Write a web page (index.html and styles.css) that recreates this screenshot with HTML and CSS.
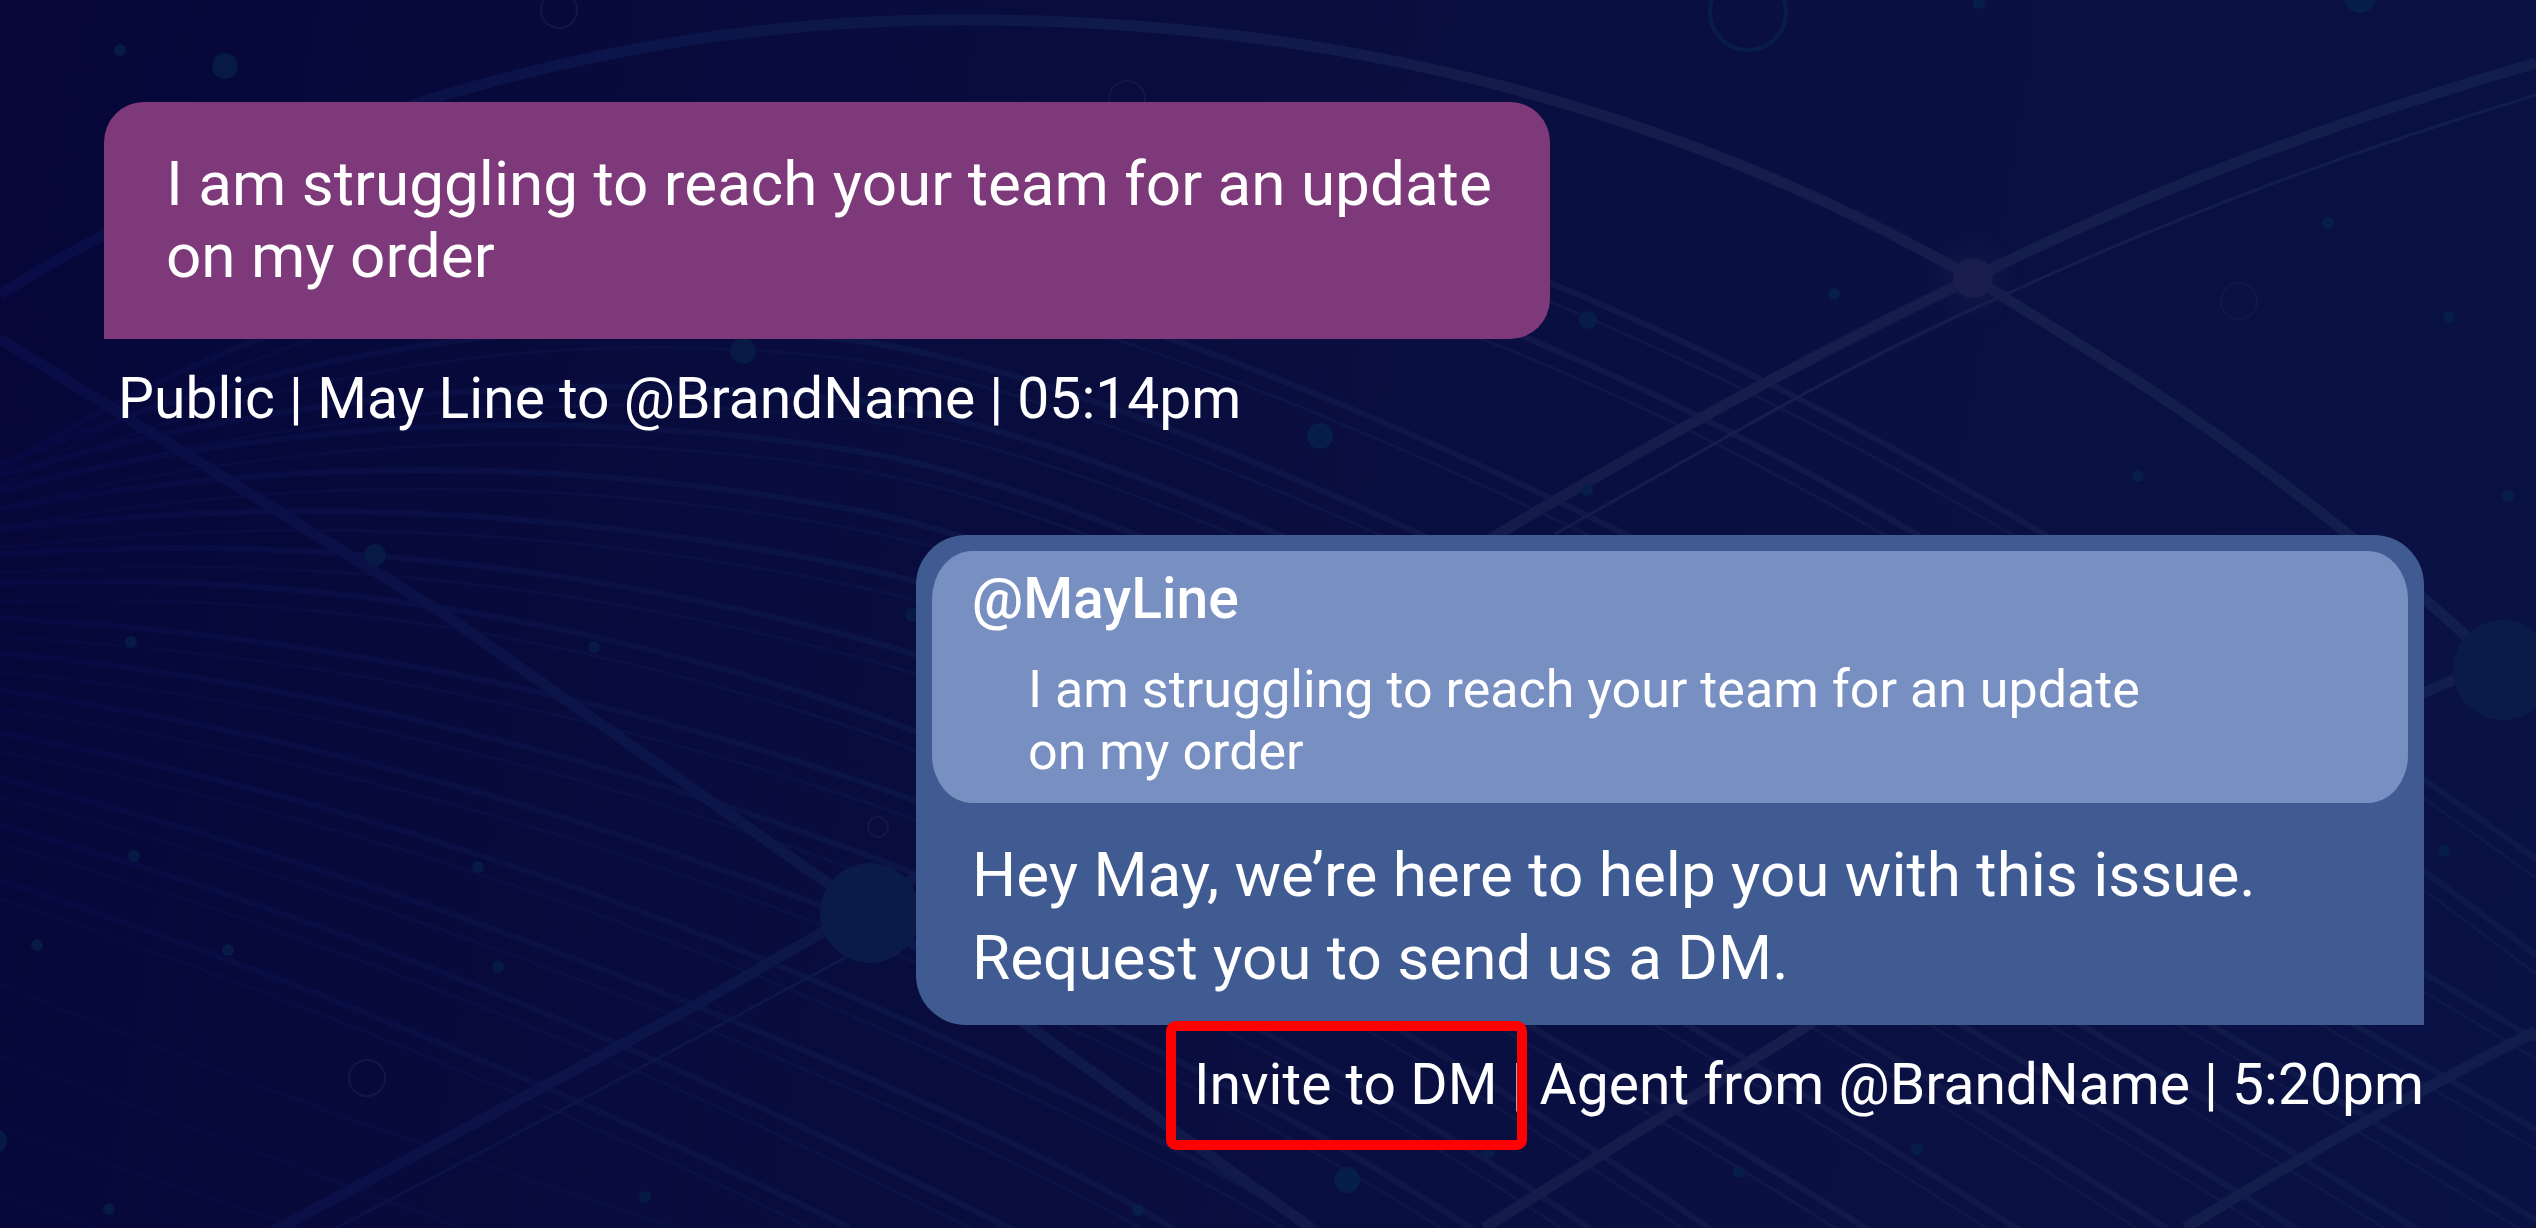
FILE: index.html
```html
<!DOCTYPE html>
<html lang="en">
<head>
    <meta charset="UTF-8">
    <meta name="viewport" content="width=device-width, initial-scale=1.0">
    <title>Invite to DM</title>
    <link rel="stylesheet" href="styles.css">
</head>
<body>
    <svg class="backdrop" viewBox="0 0 2536 1228" preserveAspectRatio="xMidYMid slice" aria-hidden="true">
        <defs>
            <linearGradient id="lineColor" gradientUnits="userSpaceOnUse" x1="0" y1="0" x2="2536" y2="0">
                <stop offset="0" stop-color="#090c46"/>
                <stop offset="0.35" stop-color="#0d184a"/>
                <stop offset="0.7" stop-color="#171d4c"/>
                <stop offset="1" stop-color="#111e4d"/>
            </linearGradient>
            <radialGradient id="glow">
                <stop offset="0.3" stop-color="#1a1e4d" stop-opacity="0.4"/>
                <stop offset="1" stop-color="#1a1e4d" stop-opacity="0"/>
            </radialGradient>
            <g id="fan">
                <path d="M0 880 Q425 1020 850 1228"/>
                <path d="M0 825 Q425 944 850 1150 T1100 1290"/>
                <path d="M0 778 Q425 886 850 1070 T1250 1310"/>
                <path d="M0 733 Q425 811 850 996 T1400 1290"/>
                <path d="M0 690 Q425 752 850 917 T1560 1290"/>
                <path d="M0 653 Q425 693 850 849 T1620 1250"/>
                <path d="M0 618 Q430 640 850 778 T1740 1250"/>
                <path d="M0 583 Q425 565 850 708 T1900 1250"/>
                <path d="M0 554 Q425 525 850 636 T2050 1250"/>
                <path d="M0 529 Q425 480 850 566 T2200 1250"/>
                <path d="M0 509 Q425 431 850 509 T2330 1250"/>
                <path d="M0 489 Q425 385 850 450 T2450 1250"/>
                <path d="M0 475 Q425 352 850 400 T2536 1220"/>
                <path d="M0 465 Q425 288 850 340 T2536 1130"/>
                <path d="M0 470 Q430 200 900 268 T2536 1040"/>
                <path d="M1300 260 Q1800 395 2536 955"/>
                <path d="M1400 225 Q1900 400 2536 859"/>
            </g>
        </defs>

        <g fill="none" stroke="url(#lineColor)">
            <use href="#fan" stroke-width="6" opacity="0.75"/>
            <use href="#fan" y="19" stroke-width="3" opacity="0.6"/>
            <g stroke-width="3" opacity="0.5">
                <path d="M0 984 Q330 1120 678 1228"/>
                <path d="M0 1056 L461 1228"/>
                <path d="M0 1127 L300 1228"/>
                <path d="M0 1193 L98 1228"/>
            </g>
            <g stroke-width="11">
                <path d="M0 294 C300 110 640 15 985 20 C1330 22 1660 100 1973 278 C2170 400 2300 480 2503 670"/>
                <path d="M0 339 L444 614 L870 913 L1311 1228"/>
                <path d="M270 1233 L694 1006 L870 905 C1080 775 1290 680 1495 536 C1640 450 1800 360 1973 278 C2160 185 2340 120 2536 63"/>
                <path d="M2503 660 C2250 760 2050 870 1805 1027 L1484 1228"/>
                <path d="M2536 1031 Q2360 1120 2185 1228"/>
            </g>
            <g stroke-width="3">
                <path d="M336 1228 L575 1103 L850 955 M1555 534 L1700 452 C1800 395 1900 340 2011 292 Q2255 180 2536 95"/>
            </g>
        </g>

        <g fill="none" stroke="#141744" stroke-width="2">
            <circle cx="559" cy="10" r="18"/>
            <circle cx="1127" cy="99" r="18"/>
            <circle cx="2239" cy="301" r="18"/>
            <circle cx="367" cy="1078" r="18"/>
            <circle cx="878" cy="827" r="10"/>
        </g>
        <circle cx="1748" cy="12" r="38" fill="none" stroke="#081d4a" stroke-width="4"/>

        <circle cx="1973" cy="278" r="48" fill="url(#glow)"/>
        <circle cx="1973" cy="278" r="20" fill="#1a1e4d"/>

        <g fill="#0a1b49">
            <circle cx="870" cy="913" r="50"/>
            <circle cx="2503" cy="670" r="50"/>
        </g>
        <g fill="#061a45">
            <circle cx="120" cy="50" r="6"/>
            <circle cx="225" cy="66" r="13"/>
            <circle cx="743" cy="351" r="13"/>
            <circle cx="375" cy="555" r="11"/>
            <circle cx="131" cy="642" r="6"/>
            <circle cx="594" cy="647" r="6"/>
            <circle cx="134" cy="856" r="6"/>
            <circle cx="478" cy="867" r="6"/>
            <circle cx="37" cy="945" r="6"/>
            <circle cx="228" cy="950" r="6"/>
            <circle cx="498" cy="967" r="6"/>
            <circle cx="109" cy="1209" r="6"/>
            <circle cx="645" cy="1197" r="6"/>
            <circle cx="-6" cy="1141" r="13"/>
            <circle cx="912" cy="615" r="7"/>
        </g>
        <g fill="#071e4b">
            <circle cx="1588" cy="320" r="9"/>
            <circle cx="1320" cy="436" r="13"/>
            <circle cx="1587" cy="490" r="6"/>
            <circle cx="1834" cy="294" r="6"/>
            <circle cx="1979" cy="3" r="6"/>
            <circle cx="2360" cy="-3" r="16"/>
            <circle cx="2328" cy="223" r="6"/>
            <circle cx="2449" cy="317" r="6"/>
            <circle cx="2138" cy="476" r="6"/>
            <circle cx="2508" cy="496" r="6"/>
            <circle cx="2444" cy="851" r="6"/>
            <circle cx="1347" cy="1180" r="13"/>
            <circle cx="1488" cy="1152" r="7"/>
            <circle cx="1138" cy="1210" r="6"/>
            <circle cx="1739" cy="1172" r="6"/>
            <circle cx="1917" cy="1149" r="6"/>
        </g>
    </svg>

    <main class="chat">
        <article class="message customer">
            <div class="bubble">
                <p>I am struggling to reach your team for an update<br>on my order</p>
            </div>
            <p class="meta">Public | May Line to @BrandName | 05:14pm</p>
        </article>

        <article class="message agent">
            <div class="bubble">
                <blockquote class="quote">
                    <h2 class="handle">@MayLine</h2>
                    <p class="quote-text">I am struggling to reach your team for an update<br>on my order</p>
                </blockquote>
                <p class="reply">Hey May, we’re here to help you with this issue.<br>Request you to send us a DM.</p>
            </div>
            <p class="meta"><span class="highlight">Invite to DM</span> | Agent from @BrandName | 5:20pm</p>
        </article>
    </main>
</body>
</html>
```
FILE: styles.css
```css
* {
    box-sizing: border-box;
}

body {
    margin: 0;
    min-height: 100vh;
    background: linear-gradient(100deg, #060639 0%, #090d3e 40%, #0a1042 75%, #0a1144 100%);
    color: #fff;
    font-family: Roboto, "Liberation Sans", sans-serif;
}

p, h2, blockquote {
    margin: 0;
}

.backdrop {
    position: fixed;
    inset: 0;
    width: 100%;
    height: 100%;
    z-index: -1;
}

.chat {
    display: flex;
    flex-direction: column;
    gap: 100px;
    padding: 102px 112px 60px 104px;
}

.message {
    display: flex;
    flex-direction: column;
    gap: 24px;
}

.customer {
    align-items: flex-start;
}

.customer .bubble {
    padding: 46px 58px 47px 62px;
    background-color: #7d3979;
    border-radius: 40px 40px 40px 0;
    font-size: 62px;
    line-height: 72px;
}

.customer .meta {
    padding-left: 14px;
}

.meta {
    font-size: 57px;
    line-height: 72px;
}

.agent {
    align-items: flex-end;
}

.agent .bubble {
    width: 65%;
    padding: 16px 16px 26px;
    background-color: #405b92;
    border-radius: 50px 50px 0 50px;
}

.quote {
    padding: 12px 40px 20px;
    background-color: #788fc1;
    border-radius: 40px / 48px;
}

.handle {
    font-size: 57px;
    font-weight: 500;
    line-height: 72px;
}

.quote-text {
    padding: 24px 0 0 56px;
    font-size: 52px;
    line-height: 62px;
}

.reply {
    padding: 30px 40px 0;
    font-size: 62px;
    line-height: 83px;
}

.highlight {
    position: relative;
}

/* red marker drawn over the text */
.highlight::after {
    content: "";
    position: absolute;
    inset: -30px -30px -32px -28px;
    border: 10px solid #f00;
    border-radius: 10px;
}
```
